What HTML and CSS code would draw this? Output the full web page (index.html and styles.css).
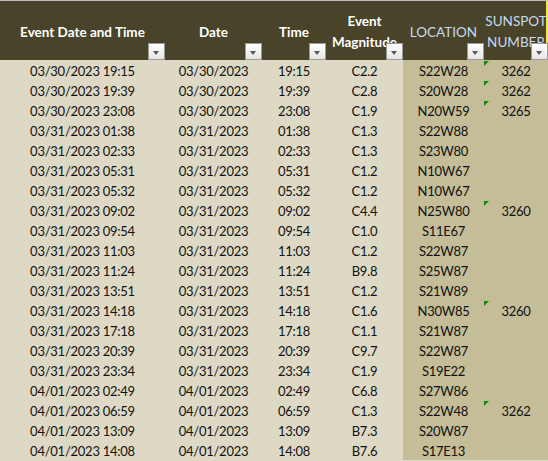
FILE: index.html
```html
<!DOCTYPE html>
<html>
<head>
<meta charset="utf-8">
<link rel="stylesheet" href="styles.css">
</head>
<body>
<table class="sheet">
  <colgroup>
    <col class="c1"><col class="c2"><col class="c3"><col class="c4"><col class="c5"><col class="c6">
  </colgroup>
  <thead>
    <tr>
      <th><span class="lbl">Event Date and Time</span><span class="flt"></span></th>
      <th><span class="lbl">Date</span><span class="flt"></span></th>
      <th><span class="lbl">Time</span><span class="flt"></span></th>
      <th><span class="lbl">Event<br>Magnitude</span><span class="flt"></span></th>
      <th class="blue"><span class="lbl">LOCATION</span><span class="flt"></span></th>
      <th class="blue last"><span class="lbl">SUNSPOT<br>NUMBER</span><span class="flt"></span></th>
    </tr>
  </thead>
  <tbody>
    <tr><td>03/30/2023 19:15</td><td>03/30/2023</td><td>19:15</td><td>C2.2</td><td class="tan">S22W28</td><td class="tan note">3262</td></tr>
    <tr><td>03/30/2023 19:39</td><td>03/30/2023</td><td>19:39</td><td>C2.8</td><td class="tan">S20W28</td><td class="tan note">3262</td></tr>
    <tr><td>03/30/2023 23:08</td><td>03/30/2023</td><td>23:08</td><td>C1.9</td><td class="tan">N20W59</td><td class="tan note">3265</td></tr>
    <tr><td>03/31/2023 01:38</td><td>03/31/2023</td><td>01:38</td><td>C1.3</td><td class="tan">S22W88</td><td class="tan"></td></tr>
    <tr><td>03/31/2023 02:33</td><td>03/31/2023</td><td>02:33</td><td>C1.3</td><td class="tan">S23W80</td><td class="tan"></td></tr>
    <tr><td>03/31/2023 05:31</td><td>03/31/2023</td><td>05:31</td><td>C1.2</td><td class="tan">N10W67</td><td class="tan"></td></tr>
    <tr><td>03/31/2023 05:32</td><td>03/31/2023</td><td>05:32</td><td>C1.2</td><td class="tan">N10W67</td><td class="tan"></td></tr>
    <tr><td>03/31/2023 09:02</td><td>03/31/2023</td><td>09:02</td><td>C4.4</td><td class="tan">N25W80</td><td class="tan note">3260</td></tr>
    <tr><td>03/31/2023 09:54</td><td>03/31/2023</td><td>09:54</td><td>C1.0</td><td class="tan">S11E67</td><td class="tan"></td></tr>
    <tr><td>03/31/2023 11:03</td><td>03/31/2023</td><td>11:03</td><td>C1.2</td><td class="tan">S22W87</td><td class="tan"></td></tr>
    <tr><td>03/31/2023 11:24</td><td>03/31/2023</td><td>11:24</td><td>B9.8</td><td class="tan">S25W87</td><td class="tan"></td></tr>
    <tr><td>03/31/2023 13:51</td><td>03/31/2023</td><td>13:51</td><td>C1.2</td><td class="tan">S21W89</td><td class="tan"></td></tr>
    <tr><td>03/31/2023 14:18</td><td>03/31/2023</td><td>14:18</td><td>C1.6</td><td class="tan">N30W85</td><td class="tan note">3260</td></tr>
    <tr><td>03/31/2023 17:18</td><td>03/31/2023</td><td>17:18</td><td>C1.1</td><td class="tan">S21W87</td><td class="tan"></td></tr>
    <tr><td>03/31/2023 20:39</td><td>03/31/2023</td><td>20:39</td><td>C9.7</td><td class="tan">S22W87</td><td class="tan"></td></tr>
    <tr><td>03/31/2023 23:34</td><td>03/31/2023</td><td>23:34</td><td>C1.9</td><td class="tan">S19E22</td><td class="tan"></td></tr>
    <tr><td>04/01/2023 02:49</td><td>04/01/2023</td><td>02:49</td><td>C6.8</td><td class="tan">S27W86</td><td class="tan"></td></tr>
    <tr><td>04/01/2023 06:59</td><td>04/01/2023</td><td>06:59</td><td>C1.3</td><td class="tan">S22W48</td><td class="tan note">3262</td></tr>
    <tr><td>04/01/2023 13:09</td><td>04/01/2023</td><td>13:09</td><td>B7.3</td><td class="tan">S20W87</td><td class="tan"></td></tr>
    <tr><td>04/01/2023 14:08</td><td>04/01/2023</td><td>14:08</td><td>B7.6</td><td class="tan">S17E13</td><td class="tan"></td></tr>
  </tbody>
</table>
</body>
</html>
```
FILE: styles.css
```css
html, body {
  margin: 0;
  padding: 0;
  background: #ddd9c4;
}
body {
  font-family: Lato, "Liberation Sans", sans-serif;
  font-size: 13px;
  color: #111;
  border-top: 1px solid #bdbdbd;
  overflow: hidden;
}
.sheet {
  border-collapse: collapse;
  table-layout: fixed;
  width: 548px;
}
.c1 { width: 165px; }
.c2 { width: 97px; }
.c3 { width: 64px; }
.c4 { width: 77px; }
.c5 { width: 81px; }
.c6 { width: 64px; }

th {
  position: relative;
  height: 59px;
  padding: 0;
  background: #494429;
  color: #ffffff;
  font-weight: 700;
  font-size: 13.5px;
  line-height: 21px;
  text-align: center;
  vertical-align: middle;
}
th .lbl {
  display: block;
  padding-top: 3px;
}
th.blue {
  color: #c6d9f1;
  font-weight: 400;
}
th.last {
  box-shadow: inset -2px 0 0 #f2e64a;
}
.flt {
  position: absolute;
  right: 0;
  bottom: 0;
  width: 15px;
  height: 15px;
  border: 1px solid #9a9a9a;
  background: linear-gradient(#ffffff, #e6e6e6);
}
.flt::after {
  content: "";
  position: absolute;
  left: 4px;
  top: 7px;
  border-left: 3.5px solid transparent;
  border-right: 3.5px solid transparent;
  border-top: 4px solid #555555;
}
td {
  height: 20px;
  padding: 2px 0 0 0;
  box-sizing: border-box;
  line-height: 18px;
  letter-spacing: -0.25px;
  text-align: center;
  white-space: nowrap;
  vertical-align: middle;
}
td.tan {
  background: #c4bd97;
}
td.note {
  position: relative;
}
td.note::before {
  content: "";
  position: absolute;
  left: 0;
  top: 1px;
  border-top: 5px solid #118a11;
  border-right: 5px solid transparent;
}
```
